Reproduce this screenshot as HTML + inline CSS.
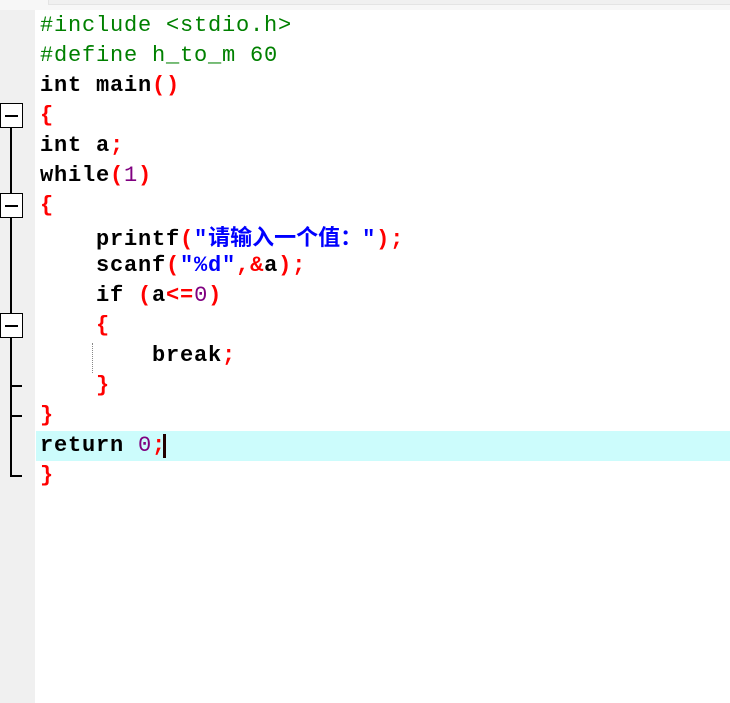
<!DOCTYPE html>
<html><head><meta charset="utf-8"><style>
html,body{margin:0;width:730px;height:703px;background:#fff;position:relative;overflow:hidden}
.top{position:absolute;left:0;top:0;width:730px;height:10px;background:#f7f7f7}
.top2{position:absolute;left:48px;top:0;width:682px;height:4px;background:#f0f0f0;border-bottom:1px solid #e4e4e4;border-left:1px solid #e4e4e4}
.gut{position:absolute;left:0;top:10px;width:35px;height:693px;background:#f0f0f0}
.hl{position:absolute;left:36px;top:431px;width:694px;height:30px;background:#ccfcfc}
.code{position:absolute;left:40px;top:11px;font-family:"Liberation Mono","Noto Sans CJK SC",monospace;font-size:22px;letter-spacing:0.8px;font-weight:bold;color:#000}
.code div{height:30px;line-height:30px;white-space:pre}
.g{color:#008000;font-weight:normal}
.r{color:#f00}
.p{color:#800080;font-weight:normal}
.b{color:#00f}
.cjk{font-family:"Noto Sans CJK SC",sans-serif;letter-spacing:0;font-size:22px}
.box{position:absolute;left:0;width:21px;height:23px;border:1.5px solid #000;background:#fff}
.box:after{content:"";position:absolute;left:4px;top:10.5px;width:13px;height:2px;background:#000}
.vl{position:absolute;left:10px;width:2px;background:#000}
.tk{position:absolute;left:10px;width:12px;height:2px;background:#000}
.cur{position:absolute;left:163px;top:434px;width:3px;height:24px;background:#200}
.dot{position:absolute;left:92px;top:343px;height:30px;border-left:1px dotted #888}
</style></head><body>
<div class="top"></div><div class="top2"></div>
<div class="gut"></div>
<div class="hl"></div>
<div class="vl" style="top:127px;height:350px"></div>
<div class="box" style="top:103px"></div>
<div class="box" style="top:193px"></div>
<div class="box" style="top:313px"></div>
<div class="tk" style="top:385px"></div>
<div class="tk" style="top:415px"></div>
<div class="tk" style="top:475px"></div>
<div class="dot"></div>
<div class="code"><div class="g">#include &lt;stdio.h&gt;</div><div class="g">#define h_to_m 60</div><div>int main<span class="r">()</span></div><div class="r">{</div><div>int a<span class="r">;</span></div><div>while<span class="r">(</span><span class="p">1</span><span class="r">)</span></div><div class="r">{</div><div>    printf<span class="r">(</span><span class="b">"<span class="cjk">请输入一个值：</span>"</span><span class="r">);</span></div><div>    scanf<span class="r">(</span><span class="b">"%d"</span><span class="r">,&amp;</span>a<span class="r">);</span></div><div>    if <span class="r">(</span>a<span class="r">&lt;=</span><span class="p">0</span><span class="r">)</span></div><div class="r">    {</div><div>        break<span class="r">;</span></div><div class="r">    }</div><div class="r">}</div><div>return <span class="p">0</span><span class="r">;</span></div><div class="r">}</div></div>
<div class="cur"></div>
</body></html>
